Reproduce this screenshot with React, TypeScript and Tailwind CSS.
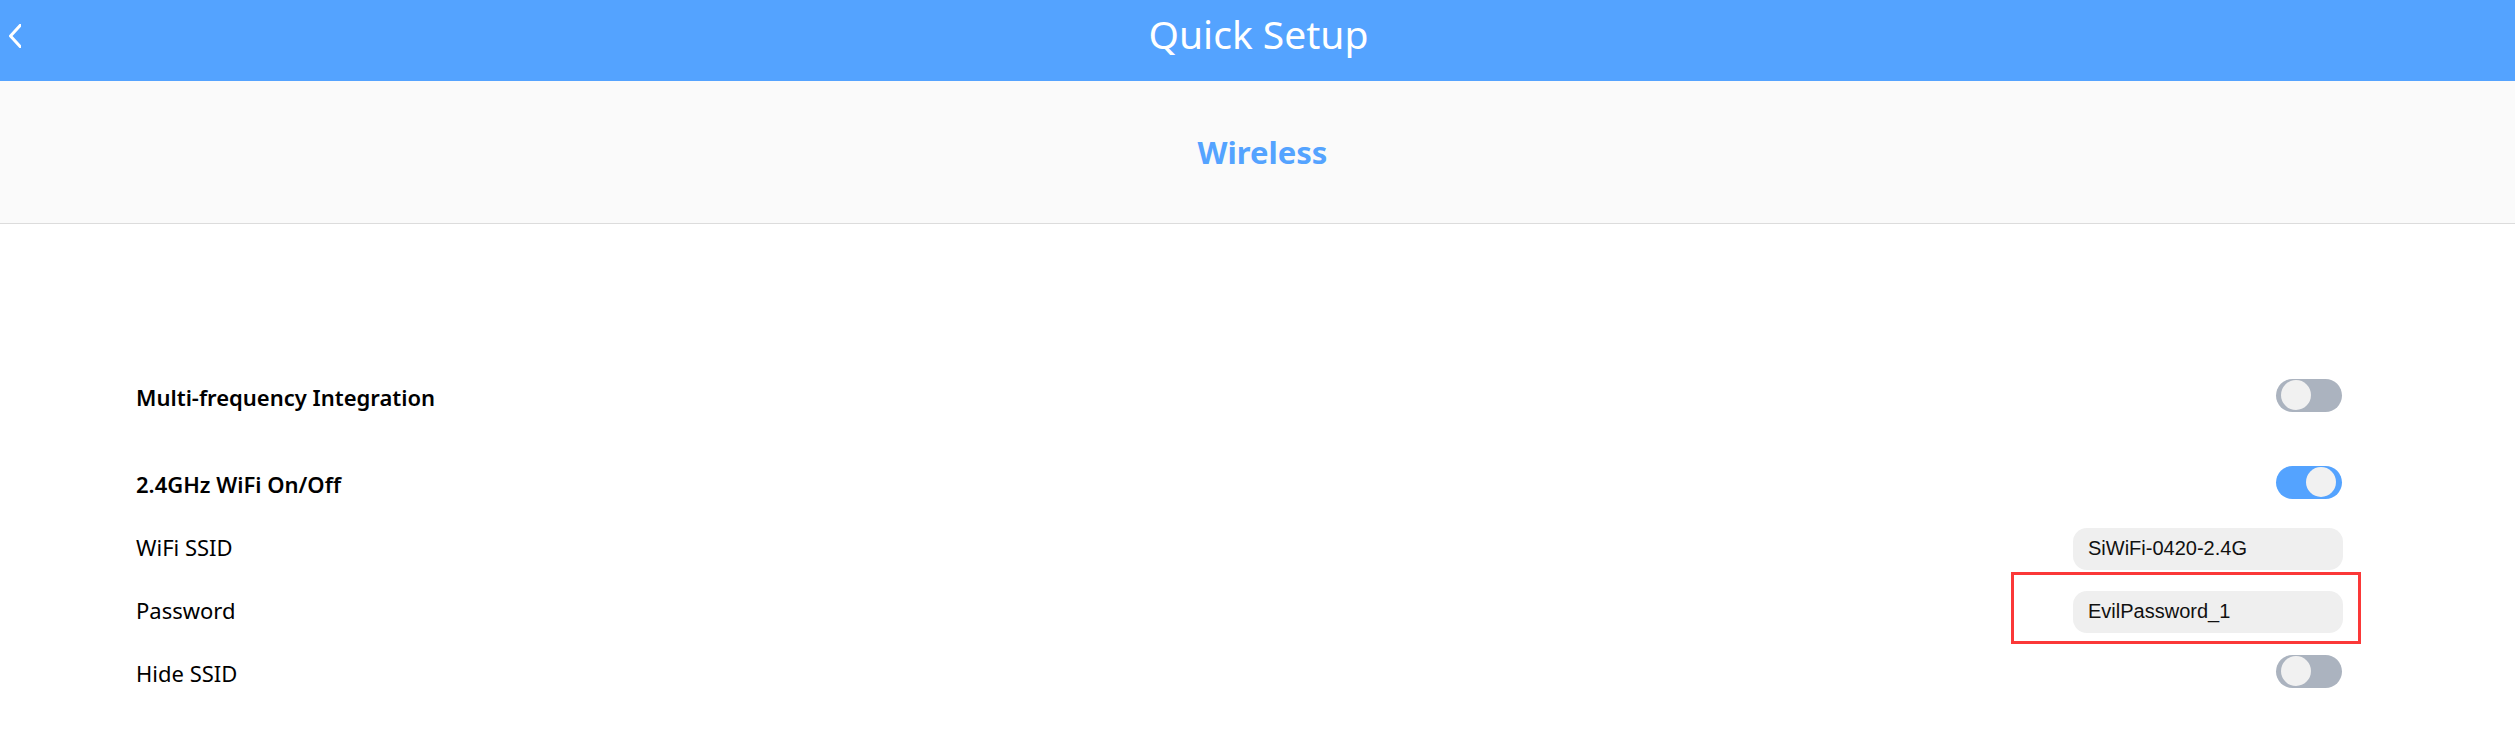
import { useState } from 'react';
import type { ReactNode } from 'react';

type ToggleProps = { id: string; defaultChecked?: boolean };

function Toggle({ id, defaultChecked = false }: ToggleProps) {
  return (
    <input
      id={id}
      type="checkbox"
      role="switch"
      defaultChecked={defaultChecked}
      className="mt-px mr-px flex h-[33px] w-[66px] shrink-0 cursor-pointer appearance-none items-start rounded-full bg-[#abb3bf] px-[5px] pt-px before:size-[30px] before:rounded-full before:bg-[#f1f1f1] before:content-[''] checked:justify-end checked:bg-[#54a3ff] checked:pr-[6px]"
    />
  );
}

type FieldProps = { id: string; initial: string; highlighted?: boolean };

function Field({ id, initial, highlighted = false }: FieldProps) {
  const [value, setValue] = useState(initial);
  return (
    <div className="relative">
      <input
        id={id}
        type="text"
        value={value}
        onChange={(e) => setValue(e.target.value)}
        className="block h-[42px] w-[270px] rounded-[14px] bg-[#efefef] px-[15px] pb-0.5 font-['Liberation_Sans',Arial,sans-serif] text-[20px] text-[#111] outline-none"
      />
      {highlighted && (
        <div className="pointer-events-none absolute -top-[19px] -right-[18px] -bottom-[11px] -left-[62px] border-3 border-[#fb3838]" />
      )}
    </div>
  );
}

type RowProps = { id: string; label: string; strong?: boolean; children: ReactNode };

function Row({ id, label, strong = false, children }: RowProps) {
  return (
    <div className="flex h-[42px] items-start justify-between">
      <label
        htmlFor={id}
        className={strong ? 'text-[22px] leading-[38px] font-semibold' : 'text-[22px] leading-[38px]'}
      >
        {label}
      </label>
      {children}
    </div>
  );
}

export default function App() {
  return (
    <div className="min-h-screen bg-white font-['Noto_Sans','Open_Sans',sans-serif] text-black">
      <header className="grid h-[81px] grid-cols-[1fr_auto_1fr] bg-[#54a3ff] text-white">
        <button type="button" aria-label="Back" className="mt-6 ml-[9px] h-6 w-3 cursor-pointer">
          <svg viewBox="0 0 12 24" className="h-6 w-3" fill="none" stroke="currentColor" strokeWidth="3">
            <path d="M12.5 0 L1.5 12 L12.5 24" strokeLinejoin="round" />
          </svg>
        </button>
        <h1 className="pl-0.5 text-[39px] leading-[68px]">Quick Setup</h1>
      </header>
      <section className="flex h-[143px] items-center justify-center border-b border-[#dcdcdc] bg-[#fafafa] pl-2.5">
        <h2 className="text-[31px] leading-[44px] font-bold text-[#54a3ff]">Wireless</h2>
      </section>
      <main className="flex flex-col gap-[45px] pt-[154px] pr-[172px] pl-[136px]">
        <Row id="multi" label="Multi-frequency Integration" strong>
          <Toggle id="multi" />
        </Row>
        <div className="flex flex-col gap-[21px]">
          <Row id="wifi24" label="2.4GHz WiFi On/Off" strong>
            <Toggle id="wifi24" defaultChecked />
          </Row>
          <Row id="ssid" label="WiFi SSID">
            <Field id="ssid" initial="SiWiFi-0420-2.4G" />
          </Row>
          <Row id="password" label="Password">
            <Field id="password" initial="EvilPassword_1" highlighted />
          </Row>
          <Row id="hide" label="Hide SSID">
            <Toggle id="hide" />
          </Row>
        </div>
      </main>
    </div>
  );
}
